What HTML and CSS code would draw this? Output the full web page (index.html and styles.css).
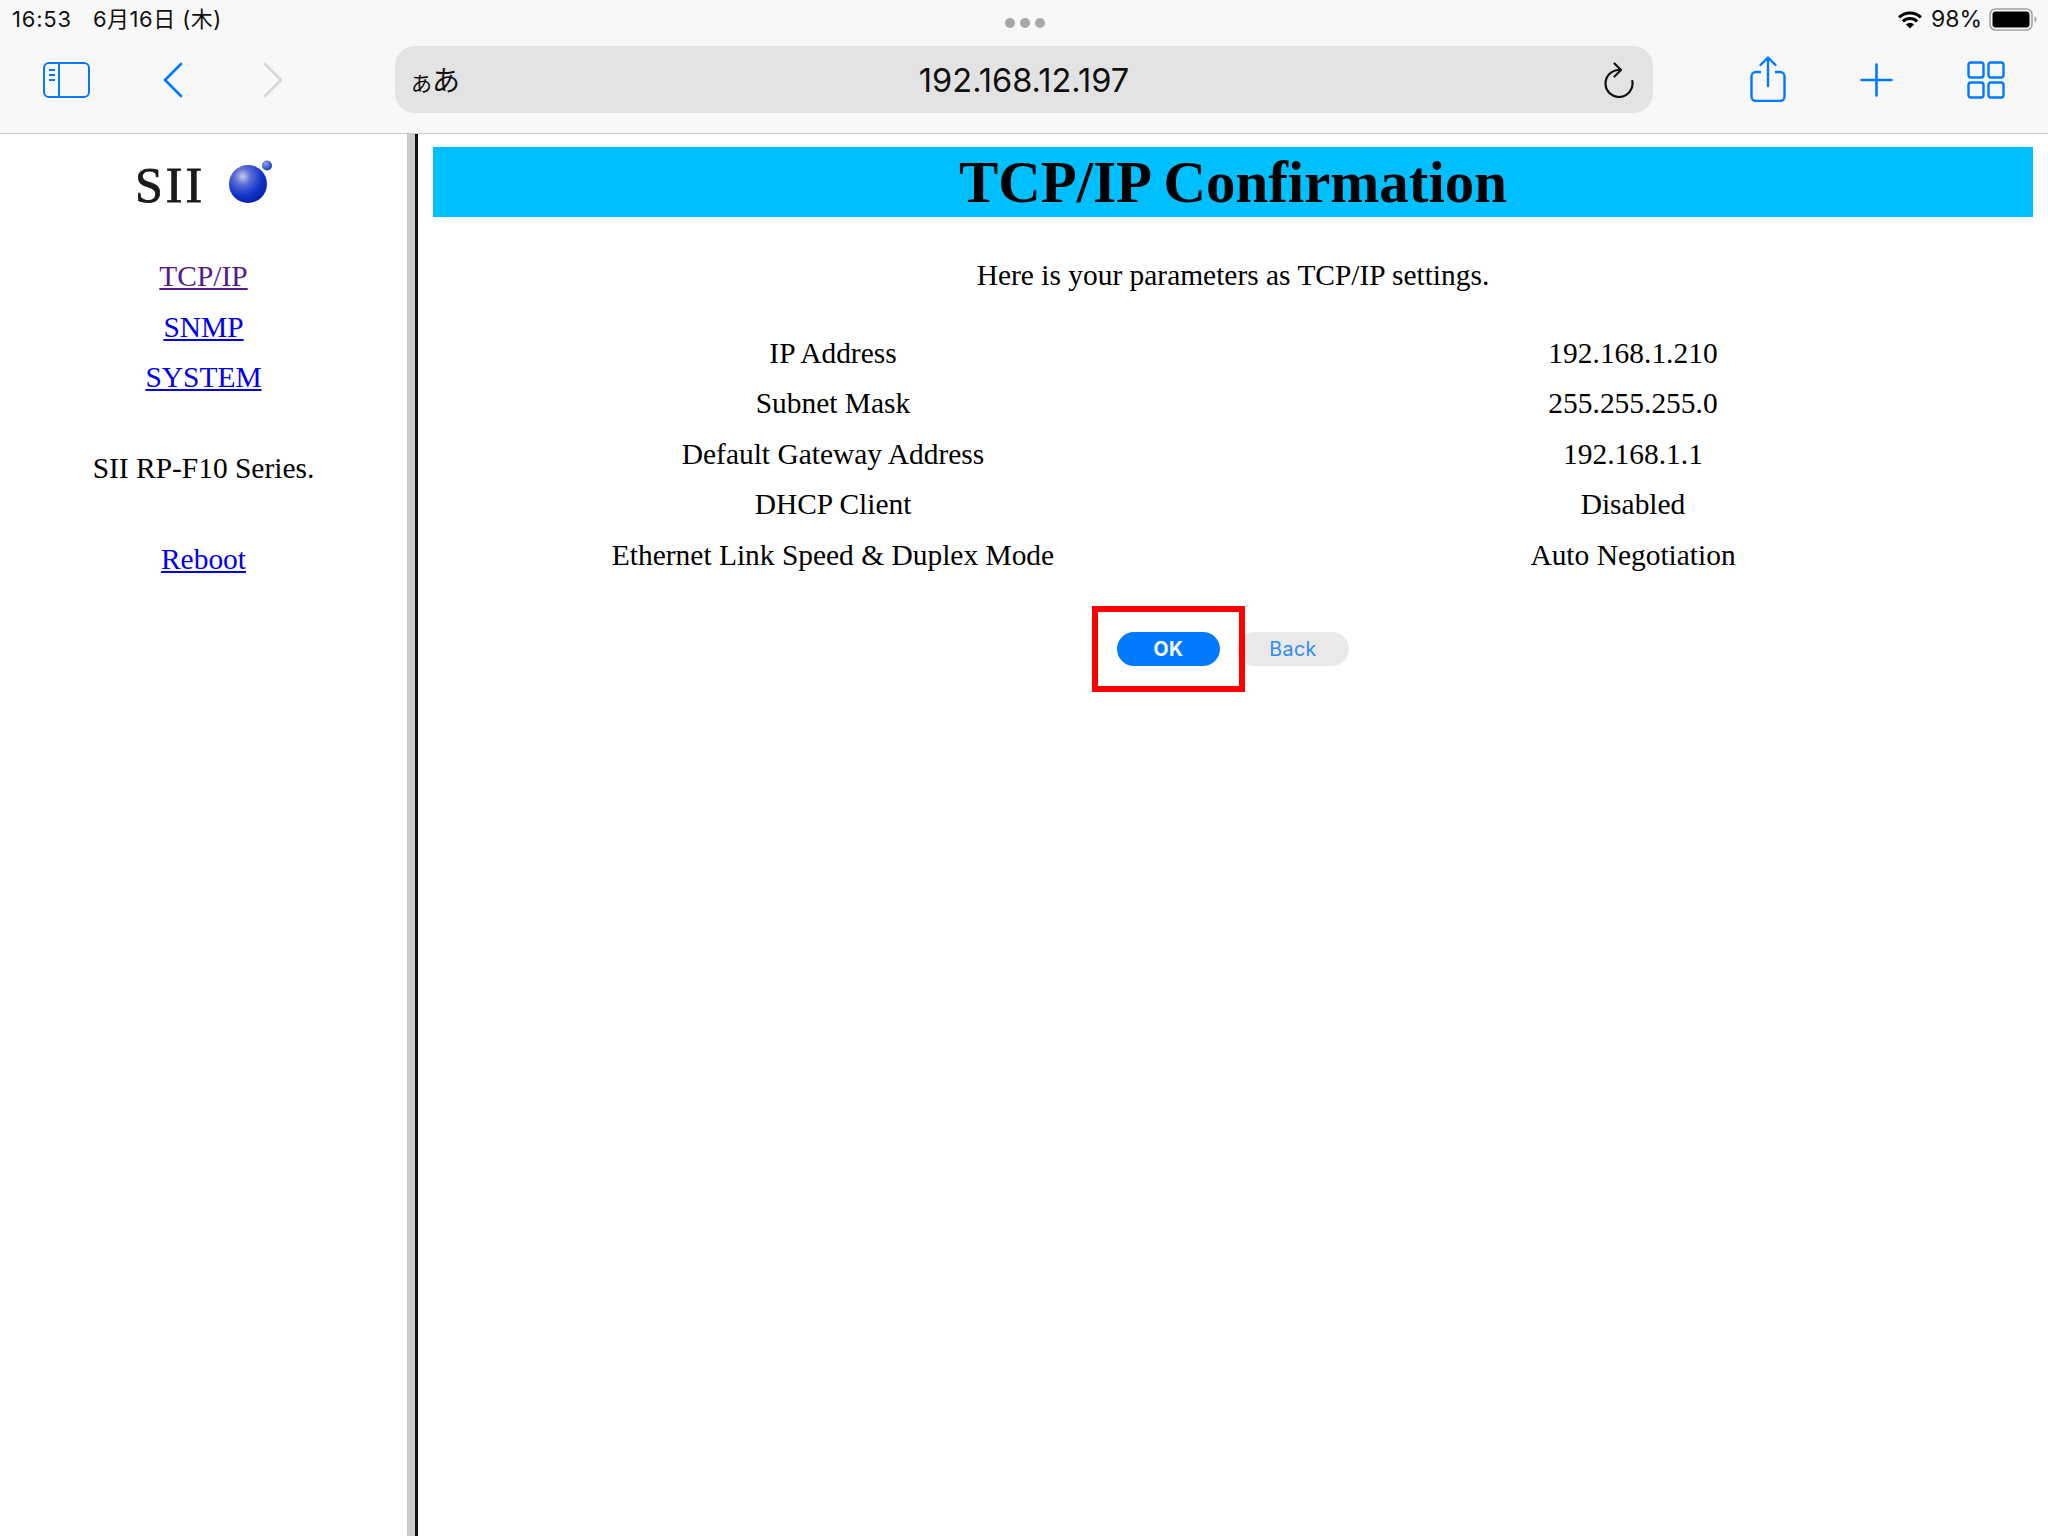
FILE: index.html
```html
<!DOCTYPE html>
<html lang="ja">
<head>
<meta charset="utf-8">
<title>TCP/IP Confirmation</title>
<link rel="stylesheet" href="styles.css">
</head>
<body>
<div class="app">
  <header class="chrome">
    <div class="status">
      <div class="status-left"><span>16:53</span><span class="date">6月16日 (木)</span></div>
      <div class="dots"><i></i><i></i><i></i></div>
      <div class="status-right">
        <svg class="wifi" viewBox="0 0 26 19" width="26" height="19"><path d="M13 18.6 8.900 14.400a6 6 0 0 1 8.200 0z" fill="#000"/><path d="M5.900 11.400a10.300 10.300 0 0 1 14.200 0" fill="none" stroke="#000" stroke-width="3"/><path d="M2.100 7.300a15.800 15.800 0 0 1 21.800 0" fill="none" stroke="#000" stroke-width="3"/></svg>
        <span class="pct">98%</span>
        <svg class="battery" viewBox="0 0 48 23" width="48" height="23"><rect x="1" y="1" width="42" height="21" rx="5.500" fill="none" stroke="#a3a3a3" stroke-width="1.600"/><rect x="3.500" y="3.500" width="37" height="16" rx="3.200" fill="#000"/><path d="M45.500 8.500c1.500.5 2 1.600 2 3s-.5 2.500-2 3z" fill="#a3a3a3"/></svg>
      </div>
    </div>
    <div class="toolbar">
      <svg class="i-side" viewBox="0 0 47 36" width="47" height="36"><rect x="1" y="1" width="45" height="34" rx="5" fill="none" stroke="#007aff" stroke-width="2"/><path d="M16 1v34" stroke="#007aff" stroke-width="2"/><path d="M6 8h6M6 13h6M6 18h6" stroke="#007aff" stroke-width="2"/></svg>
      <svg class="i-back" viewBox="0 0 20 36" width="20" height="36"><path d="M18 2 2 18l16 16" fill="none" stroke="#007aff" stroke-width="2.600" stroke-linecap="round" stroke-linejoin="round"/></svg>
      <svg class="i-fwd" viewBox="0 0 20 36" width="20" height="36"><path d="m2 2 16 16L2 34" fill="none" stroke="#d6d6d6" stroke-width="2.600" stroke-linecap="round" stroke-linejoin="round"/></svg>
      <div class="urlbar">
        <span class="aa"><span class="aa-small">あ</span>あ</span>
        <span class="url">192.168.12.197</span>
        <svg class="i-reload" viewBox="0 0 30 36" width="30" height="36"><path d="M28.300 19A13.500 13.500 0 1 1 15 8" fill="none" stroke="#111" stroke-width="2.200" stroke-linecap="round"/><path d="M10.500 1.500 17 8l-6.500 6.500" fill="none" stroke="#111" stroke-width="2.200" stroke-linecap="round" stroke-linejoin="round"/></svg>
      </div>
      <svg class="i-share" viewBox="0 0 36 46" width="36" height="46"><path d="M11 16H6a4.500 4.500 0 0 0-4.500 4.500v20A4.500 4.500 0 0 0 6 45h24a4.500 4.500 0 0 0 4.500-4.500v-20A4.500 4.500 0 0 0 30 16h-5" fill="none" stroke="#007aff" stroke-width="2.400"/><path d="M18 30V2M10.500 9 18 1.500 25.500 9" fill="none" stroke="#007aff" stroke-width="2.400" stroke-linecap="round" stroke-linejoin="round"/></svg>
      <svg class="i-plus" viewBox="0 0 33 34" width="33" height="34"><path d="M16.500 1.500v31M1.500 17h30" stroke="#007aff" stroke-width="2.600" stroke-linecap="round"/></svg>
      <svg class="i-grid" viewBox="0 0 38 38" width="38" height="38"><g fill="none" stroke="#007aff" stroke-width="2.400"><rect x="1.500" y="1.500" width="15" height="15" rx="2.500"/><rect x="21.500" y="1.500" width="15" height="15" rx="2.500"/><rect x="1.500" y="21.500" width="15" height="15" rx="2.500"/><rect x="21.500" y="21.500" width="15" height="15" rx="2.500"/></g></svg>
    </div>
  </header>
  <div class="frames">
    <nav class="side">
      <div class="logo">
        <span class="logo-text">SII</span>
        <svg class="logo-ball" viewBox="0 0 43 43" width="43" height="43">
          <defs>
            <radialGradient id="ball" cx="0.36" cy="0.3" r="0.72"><stop offset="0" stop-color="#c4cbe8"/><stop offset="0.3" stop-color="#5a6fd6"/><stop offset="0.7" stop-color="#1233c8"/><stop offset="1" stop-color="#0a22a8"/></radialGradient>
            <radialGradient id="dot" cx="0.35" cy="0.3" r="0.75"><stop offset="0" stop-color="#8f9fe8"/><stop offset="1" stop-color="#1535c0"/></radialGradient>
          </defs>
          <circle cx="19" cy="24" r="19" fill="url(#ball)"/>
          <circle cx="38" cy="5.500" r="5" fill="url(#dot)"/>
        </svg>
      </div>
      <ul class="links">
        <li><a class="visited" href="#tcp">TCP/IP</a></li>
        <li><a href="#snmp">SNMP</a></li>
        <li><a href="#system">SYSTEM</a></li>
      </ul>
      <p class="series">SII RP-F10 Series.</p>
      <p class="reboot"><a href="#reboot">Reboot</a></p>
    </nav>
    <main class="main">
      <h1 class="banner">TCP/IP Confirmation</h1>
      <p class="intro">Here is your parameters as TCP/IP settings.</p>
      <table class="params">
        <tr><td>IP Address</td><td>192.168.1.210</td></tr>
        <tr><td>Subnet Mask</td><td>255.255.255.0</td></tr>
        <tr><td>Default Gateway Address</td><td>192.168.1.1</td></tr>
        <tr><td>DHCP Client</td><td>Disabled</td></tr>
        <tr><td>Ethernet Link Speed &amp; Duplex Mode</td><td>Auto Negotiation</td></tr>
      </table>
      <div class="actions">
        <span class="highlight"><button class="btn btn-ok" type="button">OK</button></span>
        <button class="btn btn-back" type="button">Back</button>
      </div>
    </main>
  </div>
</div>
</body>
</html>
```
FILE: styles.css
```css
* { box-sizing: border-box; }
html, body { margin: 0; height: 100%; }
body { background: #fff; color: #000; font-family: "Liberation Serif", serif; overflow: hidden; }
.app { display: flex; flex-direction: column; height: 100vh; }

.chrome { background: #f8f8f8; border-bottom: 1px solid #c8c8c8; font-family: Inter, "Noto Sans CJK JP", sans-serif; }
.status { display: grid; grid-template-columns: 1fr auto 1fr; align-items: center; height: 38px; padding: 0 11px 0 12px; font-size: 22px; color: #111; }
.status-left { display: flex; align-items: baseline; gap: 21px; line-height: 30px; letter-spacing: .8px; }
.date { letter-spacing: .5px; }
.dots { display: flex; gap: 5px; padding-top: 8px; }
.dots i { width: 10px; height: 10px; border-radius: 50%; background: #a8a8a8; }
.status-right { display: flex; align-items: center; justify-content: flex-end; gap: 7px; }
.wifi { margin-right: 1px; }
.pct { font-size: 23px; }

.toolbar { display: flex; align-items: center; padding: 8px 0 20px 43px; }
.i-back { margin-left: 73px; }
.i-fwd { margin-left: 80px; }
.urlbar { position: relative; display: flex; align-items: center; justify-content: space-between; width: 1258px; height: 67px; margin-left: 112px; padding: 0 19px 0 16px; border-radius: 20px; background: #e3e3e3; color: #111; }
.aa { font-size: 28px; line-height: 1; margin-top: -2px; font-family: "Noto Sans CJK JP", sans-serif; }
.aa-small { font-size: 21px; }
.url { position: absolute; left: 0; right: 0; text-align: center; font-size: 32.6px; }
.i-reload { position: relative; }
.i-share { margin-left: 97px; margin-top: -2px; }
.i-plus { margin-left: 74px; }
.i-grid { margin-left: 74px; }

.frames { flex: 1; display: flex; min-height: 0; }
.side { width: 418px; flex: none; border-right: 3px solid #111; box-shadow: inset -8px 0 0 #cbcbcb; padding-right: 8px; text-align: center; font-size: 29.44px; }
.logo { display: flex; justify-content: center; align-items: center; gap: 24px; height: 117px; padding: 0 0 16px 0; }
.logo-text { font-size: 50px; letter-spacing: 3px; color: #1a1a1a; line-height: 1; -webkit-text-stroke: .8px #1a1a1a; }
.logo-ball { margin-top: -6px; }
.links { list-style: none; margin: 0; padding: 0; }
.links li { height: 50.5px; line-height: 50.5px; }
a { color: #0000ee; text-decoration: underline; }
a.visited { color: #551a8b; }
.series { margin: 40px 0 0; line-height: 50px; }
.reboot { margin: 41px 0 0; line-height: 50px; }

.main { flex: 1; min-width: 0; padding: 13px 15px 0; font-size: 29.44px; text-align: center; }
.banner { margin: 0; height: 70px; line-height: 71px; background: #00bfff; font-size: 58.88px; font-weight: 700; }
.intro { margin: 33px 0 0; line-height: 50px; }
.params { width: 100%; margin-top: 28px; border-collapse: collapse; table-layout: fixed; }
.params td { padding: 0; height: 50.5px; text-align: center; }
.actions { display: flex; justify-content: center; align-items: center; gap: 17px; margin-top: 51px; }
.highlight { display: flex; padding: 20px 19px; margin: -26px -25px -26px -25px; border: 6px solid #f00; z-index: 1; }
.btn { height: 34px; padding: 0; border: 0; border-radius: 17px; font-family: Inter, sans-serif; font-size: 19.5px; line-height: 34px; letter-spacing: .5px; }
.btn-ok { width: 103px; background: #007aff; color: #fff; font-weight: 700; }
.btn-back { width: 112px; background: #e9e9e9; color: #2e8bf5; }
```
